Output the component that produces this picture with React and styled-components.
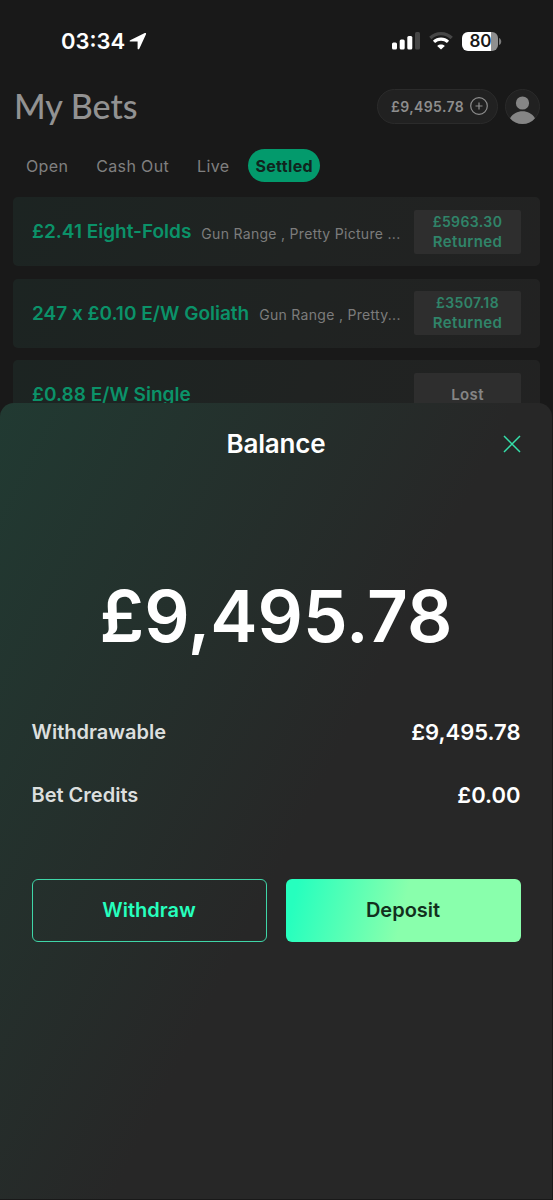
import React from 'react'
import styled, { createGlobalStyle } from 'styled-components'

const GlobalStyle = createGlobalStyle`
  * {
    box-sizing: border-box;
  }

  body {
    margin: 0;
    background: #191919;
    font-family: Inter, 'Liberation Sans', sans-serif;
  }

  button {
    font-family: inherit;
    padding: 0;
    cursor: pointer;
  }
`

const Screen = styled.div`
  position: relative;
  width: 553px;
  height: 1200px;
  overflow: hidden;
  background: #191919;
`

const StatusBar = styled.div`
  display: flex;
  justify-content: space-between;
  align-items: center;
  height: 82px;
  padding: 0 51px 0 61px;
  color: #fff;
`

const Clock = styled.div`
  display: flex;
  align-items: center;
  gap: 4px;
  font-size: 22px;
  font-weight: 600;
  letter-spacing: 0;
`

const StatusIcons = styled.div`
  display: flex;
  align-items: center;
  gap: 9px;
`

const BatteryWrap = styled.div`
  display: flex;
  align-items: center;
  gap: 1px;
`

const Battery = styled.div`
  width: 36px;
  height: 19px;
  padding-left: 1px;
  border-radius: 6px;
  background: linear-gradient(90deg, #fff 80%, #8f8f8f 80%);
  color: #191919;
  font-size: 17px;
  font-weight: 600;
  line-height: 19px;
  text-align: center;
`

const Header = styled.header`
  display: flex;
  justify-content: space-between;
  align-items: center;
  height: 48px;
  padding: 0 13px 0 14px;
`

const PageTitle = styled.h1`
  margin: 0;
  color: #929292;
  font-family: Lato, sans-serif;
  font-size: 34px;
  font-weight: 500;
  line-height: 48px;
  letter-spacing: 0;
`

const Account = styled.div`
  display: flex;
  align-items: center;
  gap: 7px;
`

const BalancePill = styled.button`
  display: flex;
  justify-content: space-between;
  align-items: center;
  width: 121px;
  height: 35px;
  padding: 0 9px 0 13px;
  border: 1px solid #2b2b2b;
  border-radius: 18px;
  background: #212121;
  color: #8e8e8e;
  font-size: 14px;
  font-weight: 600;
  letter-spacing: 0.4px;
`

const Tabs = styled.nav`
  display: flex;
  align-items: center;
  height: 67px;
  padding: 4px 0 0 26px;
`

const Tab = styled.button`
  height: 33px;
  margin-right: ${(props) => props.$gap || 0}px;
  padding: ${(props) => (props.$active ? '0 7px' : '0')};
  border: none;
  border-radius: 17px;
  background: ${(props) => (props.$active ? '#039a6c' : 'none')};
  color: ${(props) => (props.$active ? '#10251e' : '#808080')};
  font-size: 16px;
  font-weight: ${(props) => (props.$active ? 700 : 400)};
  letter-spacing: 0.35px;
`

const BetList = styled.div`
  display: flex;
  flex-direction: column;
  gap: 12.6px;
  padding: 0 13px;
`

const BetCard = styled.div`
  display: flex;
  align-items: center;
  height: 69px;
  padding: 0 19px;
  border-radius: 5px;
  background: linear-gradient(117deg, #1c2422 0%, #202322 55%, #222 100%);
`

const BetName = styled.span`
  flex-shrink: 0;
  color: #0b9269;
  font-size: 19px;
  font-weight: 600;
  letter-spacing: ${(props) => props.$spacing || 0}px;
  white-space: nowrap;
`

const Selections = styled.span`
  flex: 1;
  padding: 3px 0 0 10px;
  color: #7c7c7c;
  font-size: 14px;
  letter-spacing: 0.3px;
  white-space: nowrap;
`

const Result = styled.div`
  display: flex;
  flex-direction: column;
  align-items: center;
  justify-content: center;
  flex-shrink: 0;
  width: 107px;
  height: 44px;
  border-radius: 2px;
  background: #2e2e2e;
  color: ${(props) => (props.$lost ? '#858585' : '#308469')};
  font-size: 15px;
  font-weight: 600;
  line-height: 20px;
  letter-spacing: 0.4px;
`

const ResultAmount = styled.span`
  font-size: 14px;
`

const Sheet = styled.section`
  position: absolute;
  top: 403px;
  left: 0;
  width: 552px;
  height: 796px;
  padding: 0 31.5px;
  border-radius: 14px 14px 0 0;
  background: linear-gradient(117deg, #213a32 0%, #272727 54%);
`

const SheetHeader = styled.div`
  display: grid;
  grid-template-columns: 18px 1fr 18px;
  align-items: center;
  height: 81px;
`

const SheetTitle = styled.h2`
  grid-column: 2;
  margin: 0;
  color: #fff;
  font-size: 26px;
  font-weight: 600;
  letter-spacing: -0.2px;
  text-align: center;
`

const CloseButton = styled.button`
  display: flex;
  border: none;
  background: none;
`

const Total = styled.div`
  height: 216px;
  padding-top: 52px;
  color: #fff;
  font-size: 71px;
  font-weight: 600;
  line-height: 160px;
  letter-spacing: 0;
  text-align: center;
  white-space: nowrap;
`

const Row = styled.div`
  display: flex;
  justify-content: space-between;
  align-items: center;
  height: 63px;
`

const Label = styled.span`
  color: #dcdfde;
  font-size: 20px;
  font-weight: 600;
`

const Value = styled.span`
  color: #fff;
  font-size: 22px;
  font-weight: 600;
`

const Actions = styled.div`
  display: grid;
  grid-template-columns: 1fr 1fr;
  gap: 19px;
  margin-top: 52.5px;
`

const ActionButton = styled.button`
  height: 63px;
  border: ${(props) => (props.$filled ? 'none' : '1.5px solid #3fd6a8')};
  border-radius: 6px;
  background: ${(props) => (props.$filled ? 'linear-gradient(103deg, #26ffbe 5%, #89ffac 50%)' : 'none')};
  color: ${(props) => (props.$filled ? '#12301d' : '#26ffbe')};
  font-size: 20px;
  font-weight: 600;
`

const bets = [
  { name: '£2.41 Eight-Folds', selections: 'Gun Range , Pretty Picture ...', amount: '£5963.30', result: 'Returned' },
  { name: '247 x £0.10 E/W Goliath', selections: 'Gun Range , Pretty...', amount: '£3507.18', result: 'Returned' },
  { name: '£0.88 E/W Single', result: 'Lost' },
]

function App() {
  return (
    <Screen>
      <GlobalStyle />
      <StatusBar>
        <Clock>
          03:34
          <svg width="18" height="18" viewBox="0 0 18 18">
            <path d="M1.2 8.3 15.8 1.1c.9-.4 1.6.3 1.200 1.200L10.300 16.700c-.5 1-1.700.800-1.700-.300V9.600H1.600C.4 9.600.2 8.800 1.200 8.300Z" fill="#fff" />
          </svg>
        </Clock>
        <StatusIcons>
          <svg width="28" height="18" viewBox="0 0 28 18">
            <rect x="0" y="10.500" width="5" height="7" rx="1.500" fill="#fff" />
            <rect x="7.700" y="7.500" width="5" height="10" rx="1.500" fill="#fff" />
            <rect x="15.300" y="4" width="5" height="13.500" rx="1.500" fill="#fff" />
            <rect x="23" y="0" width="5" height="17.500" rx="1.500" fill="#464646" />
          </svg>
          <svg width="24" height="18" viewBox="0 0 24 18" fill="none">
            <path d="M1.300 6C7.300.2 16.700.2 22.700 6" stroke="#464646" strokeWidth="3.300" />
            <path d="M5 9.900C9 6.200 15 6.200 19 9.900" stroke="#fff" strokeWidth="3.200" />
            <path d="M8.200 13.900C10.400 12 13.600 12 15.800 13.900L12 17.500Z" fill="#fff" />
          </svg>
          <BatteryWrap>
            <Battery>80</Battery>
            <svg width="3" height="7" viewBox="0 0 3 7">
              <path d="M0 0C3 1 3 6 0 7Z" fill="#7a7a7a" />
            </svg>
          </BatteryWrap>
        </StatusIcons>
      </StatusBar>

      <Header>
        <PageTitle>My Bets</PageTitle>
        <Account>
          <BalancePill>
            £9,495.78
            <svg width="18" height="18" viewBox="0 0 18 18" fill="none" stroke="#8e8e8e" strokeWidth="1.200">
              <circle cx="9" cy="9" r="8.300" />
              <path d="M9 5.500v7M5.500 9h7" />
            </svg>
          </BalancePill>
          <svg width="35" height="35" viewBox="0 0 35 35">
            <circle cx="17.500" cy="17.500" r="17" fill="#212121" stroke="#2b2b2b" />
            <circle cx="17.500" cy="14" r="6.600" fill="#858585" />
            <path d="M5 29.200C8 24.500 12.500 22.300 17.500 22.300S27 24.500 30 29.200C27 33 22.500 35 17.500 35S8 33 5 29.200Z" fill="#858585" />
          </svg>
        </Account>
      </Header>

      <Tabs>
        <Tab $gap={28}>Open</Tab>
        <Tab $gap={28}>Cash Out</Tab>
        <Tab $gap={19}>Live</Tab>
        <Tab $active>Settled</Tab>
      </Tabs>

      <BetList>
        {bets.map((bet) => (
          <BetCard key={bet.name}>
            <BetName>{bet.name}</BetName>
            <Selections>{bet.selections}</Selections>
            <Result $lost={!bet.amount}>
              {bet.amount && <ResultAmount>{bet.amount}</ResultAmount>}
              <span>{bet.result}</span>
            </Result>
          </BetCard>
        ))}
      </BetList>

      <Sheet>
        <SheetHeader>
          <SheetTitle>Balance</SheetTitle>
          <CloseButton aria-label="Close">
            <svg width="18" height="18" viewBox="0 0 18 18" stroke="#35dfaa" strokeWidth="1.500">
              <path d="M1 1l16 16M17 1L1 17" />
            </svg>
          </CloseButton>
        </SheetHeader>
        <Total>£9,495.78</Total>
        <Row>
          <Label>Withdrawable</Label>
          <Value>£9,495.78</Value>
        </Row>
        <Row>
          <Label>Bet Credits</Label>
          <Value>£0.00</Value>
        </Row>
        <Actions>
          <ActionButton>Withdraw</ActionButton>
          <ActionButton $filled>Deposit</ActionButton>
        </Actions>
      </Sheet>
    </Screen>
  )
}

export default App
